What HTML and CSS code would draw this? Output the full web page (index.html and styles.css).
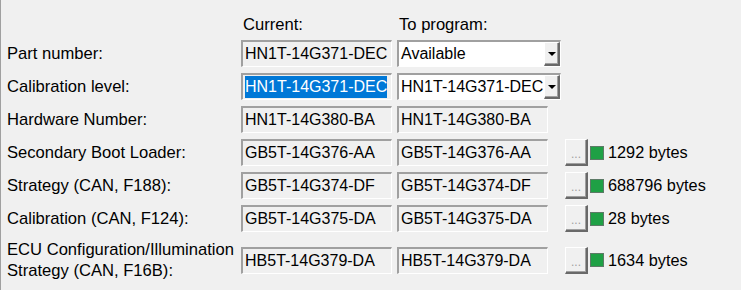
FILE: index.html
```html
<!DOCTYPE html>
<html>
<head>
<meta charset="utf-8">
<link rel="stylesheet" href="styles.css">
</head>
<body>
<div class="panel">
  <div class="grid">
    <div></div>
    <div class="hdr">Current:</div>
    <div class="hdr">To program:</div>
    <div></div>

    <div class="label">Part number:</div>
    <div class="cell"><div class="box">HN1T-14G371-DEC</div></div>
    <div class="cell"><div class="combo"><span class="combo-text">Available</span><span class="drop"><span class="tri"></span></span></div></div>
    <div></div>

    <div class="label">Calibration level:</div>
    <div class="cell"><div class="box"><span class="sel">HN1T-14G371-DEC</span></div></div>
    <div class="cell"><div class="combo"><span class="combo-text">HN1T-14G371-DEC</span><span class="drop"><span class="tri"></span></span></div></div>
    <div></div>

    <div class="label">Hardware Number:</div>
    <div class="cell"><div class="box">HN1T-14G380-BA</div></div>
    <div class="cell"><div class="box">HN1T-14G380-BA</div></div>
    <div></div>

    <div class="label">Secondary Boot Loader:</div>
    <div class="cell"><div class="box">GB5T-14G376-AA</div></div>
    <div class="cell"><div class="box">GB5T-14G376-AA</div></div>
    <div class="extra"><span class="btn">...</span><span class="led"></span><span class="size">1292 bytes</span></div>

    <div class="label">Strategy (CAN, F188):</div>
    <div class="cell"><div class="box">GB5T-14G374-DF</div></div>
    <div class="cell"><div class="box">GB5T-14G374-DF</div></div>
    <div class="extra"><span class="btn">...</span><span class="led"></span><span class="size">688796 bytes</span></div>

    <div class="label">Calibration (CAN, F124):</div>
    <div class="cell"><div class="box">GB5T-14G375-DA</div></div>
    <div class="cell"><div class="box">GB5T-14G375-DA</div></div>
    <div class="extra"><span class="btn">...</span><span class="led"></span><span class="size">28 bytes</span></div>

    <div class="label two">ECU Configuration/Illumination<br>Strategy (CAN, F16B):</div>
    <div class="cell"><div class="box">HB5T-14G379-DA</div></div>
    <div class="cell"><div class="box">HB5T-14G379-DA</div></div>
    <div class="extra"><span class="btn">...</span><span class="led"></span><span class="size">1634 bytes</span></div>
  </div>
</div>
</body>
</html>
```

FILE: styles.css
```css
html, body {
  margin: 0;
  padding: 0;
  background: #f0f0f0;
}

body {
  font-family: "Liberation Sans", Arial, sans-serif;
  font-size: 16px;
  color: #000;
}

.panel {
  height: 290px;
  box-sizing: border-box;
  border-left: 1px solid #a0a0a0;
  padding: 16px 0 0 6px;
}

.grid {
  display: grid;
  grid-template-columns: 234px 156px 168px auto;
  grid-template-rows: 18px repeat(6, 27px) 44px;
  row-gap: 6px;
  align-items: center;
}

.hdr {
  padding-left: 2px;
  line-height: 18px;
  font-size: 16.6px;
}

.label {
  white-space: nowrap;
  font-size: 16.6px;
}

.label.two {
  line-height: 21px;
}

.cell {
  display: flex;
  align-items: center;
}

.box {
  box-sizing: border-box;
  width: 151px;
  height: 27px;
  border-style: solid;
  border-width: 2px 1px 1px 2px;
  border-color: #a0a0a0 #ffffff #ffffff #a0a0a0;
  padding-left: 2px;
  display: flex;
  align-items: center;
  white-space: nowrap;
  overflow: hidden;
}

.sel {
  background: #0078d7;
  color: #fff;
  line-height: 22px;
}

.combo {
  box-sizing: border-box;
  width: 164px;
  height: 27px;
  border-style: solid;
  border-width: 2px 1px 1px 2px;
  border-color: #a0a0a0 #ffffff #ffffff #a0a0a0;
  background: #fff;
  display: flex;
  align-items: stretch;
  white-space: nowrap;
  overflow: hidden;
}

.combo-text {
  flex: 1;
  padding-left: 2px;
  display: flex;
  align-items: center;
  overflow: hidden;
}

.drop {
  box-sizing: border-box;
  width: 16px;
  background: #f0f0f0;
  border-style: solid;
  border-width: 1px 2px 2px 1px;
  border-color: #ffffff #696969 #696969 #ffffff;
  display: flex;
  align-items: center;
  justify-content: center;
  box-shadow: inset -1px -1px 0 #a0a0a0;
}

.tri {
  width: 0;
  height: 0;
  border-left: 4px solid transparent;
  border-right: 4px solid transparent;
  border-top: 4px solid #000;
}

.extra {
  display: flex;
  align-items: center;
}

.btn {
  box-sizing: border-box;
  width: 23px;
  height: 27px;
  background: #f0f0f0;
  border-style: solid;
  border-width: 1px 2px 2px 1px;
  border-color: #ffffff #696969 #696969 #ffffff;
  box-shadow: inset -1px -1px 0 #a0a0a0;
  color: #a0a0a0;
  font-size: 12px;
  display: flex;
  align-items: flex-end;
  justify-content: center;
  padding-bottom: 5px;
  line-height: 10px;
}

.led {
  box-sizing: border-box;
  width: 14px;
  height: 14px;
  margin-left: 2px;
  background: #1fa045;
  border: 1px solid #5c7a66;
}

.size {
  margin-left: 4px;
  white-space: nowrap;
  font-size: 16.3px;
}
```
